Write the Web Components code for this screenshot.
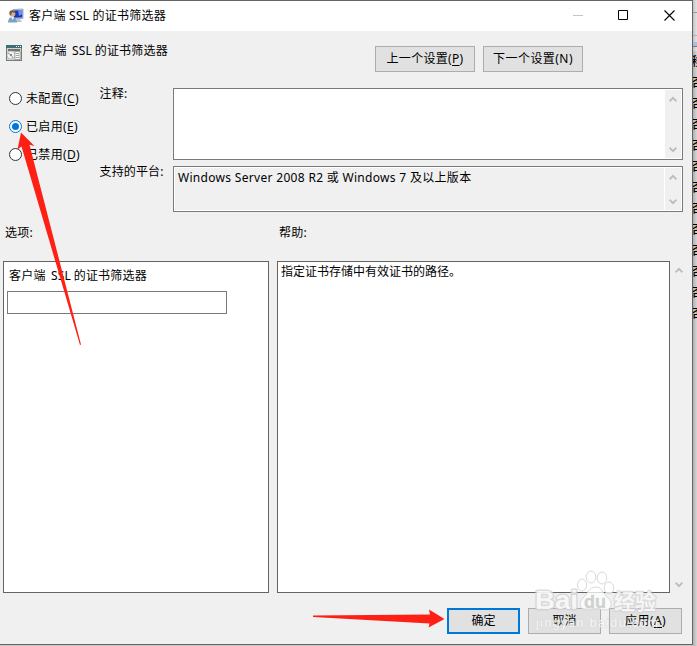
<!DOCTYPE html>
<html lang="zh-CN">
<head>
<meta charset="utf-8">
<title>客户端 SSL 的证书筛选器</title>
<style>
html,body{margin:0;width:697px;height:646px;overflow:hidden;background:#c9c9c9}
body{font:12px/16px "Noto Sans","Noto Sans CJK SC",sans-serif;color:#000}
</style>
</head>
<body>
<policy-page></policy-page>
<script>
const define = (name, html, setup) => customElements.define(name, class extends HTMLElement {
  constructor() {
    super();
    const t = document.createElement('template');
    t.innerHTML = html;
    this.attachShadow({mode: 'open'}).append(t.content.cloneNode(true));
  }
  connectedCallback() { if (setup) setup(this, this.shadowRoot); }
});

/* Text run whose letter spacing is adjusted to a given width. */
define('fit-text', `<style>:host{display:inline-block;white-space:pre;line-height:16px}span{display:inline-block}</style><span><slot></slot></span>`,
  (el, root) => {
    const s = root.querySelector('span'), w = +el.getAttribute('w');
    if (!w) return;
    const n = [...el.textContent].length;
    const d = (w - s.getBoundingClientRect().width) / n;
    s.style.letterSpacing = d.toFixed(3) + 'px';
    el.style.width = w + 'px';
  });

define('scroll-rail', `<style>
:host{display:flex;flex-direction:column;justify-content:space-between;align-items:center;width:16px;box-sizing:border-box;padding:6px 1px 5px 0;background:#f0f0f0}
svg{display:block;width:8px;height:6px}path{fill:none;stroke:#bdbdbd;stroke-width:2}</style>
<svg viewBox="0 0 8 6"><path d="M.6 5.2 4 1.8 7.4 5.2"/></svg><svg viewBox="0 0 8 6"><path d="M.6.8 4 4.2 7.4.8"/></svg>`);

define('push-button', `<style>
:host{display:flex;align-items:center;justify-content:center;box-sizing:border-box;width:73px;height:26px;background:#e1e1e1;border:1px solid #adadad}
:host([wide]){width:100px}
:host([primary]){border:2px solid #0078d7}</style><slot></slot>`);

define('radio-option', `<style>
:host{display:flex;align-items:center;height:28px;gap:4px}
i{box-sizing:border-box;width:13px;height:13px;border:1px solid #333;border-radius:50%;background:#fff;display:grid;place-items:center}
:host([checked]) i{border-color:#0078d7}
:host([checked]) i::after{content:"";width:7px;height:7px;border-radius:50%;background:#0078d7}
::slotted(*){margin-top:2px}
</style><i></i><slot></slot>`);

define('text-field', `<style>
:host{display:flex;box-sizing:border-box;border:1px solid #7a7a7a;background:#fff;padding:1px}
:host([readonly]) div{background:#f0f0f0;margin-right:1px}
div{flex:1;padding:2px 0 0 3px}</style><div><slot></slot></div><scroll-rail></scroll-rail>`);

define('title-bar', `<style>
:host{display:flex;align-items:center;height:30px;background:#fff;padding-left:8px}
.app{width:16px;height:16px;margin-right:5px}
.ctl{display:flex;margin-left:auto;margin-right:-1px}
.ctl svg{width:46px;height:30px;display:block}
</style>
<svg class="app" viewBox="0 0 16 16"><path d="M5 1.5 15 1v9.5L6 11z" fill="#d8dbe5" stroke="#8d97a9" stroke-width=".8"/><path d="M6 2.4 14.2 2v7.4L6 9.8z" fill="#1737b8"/><path d="M10 2.2 14.2 2v4L11 8z" fill="#6b92f0"/><path d="M9 11h3l2 3H8z" fill="#bcc2cd"/><path d="M0 14.5C.4 10.5 2 9 4.5 9s4.400 2 4.700 5.500z" fill="#77a3c5"/><path d="m3.200 9 1.500 3L6 9z" fill="#fff"/><circle cx="4.500" cy="5.800" r="2.900" fill="#d6b08b"/><path d="M1.400 6C1 2.500 3 1.800 5 2.300S7.700 4 7.300 5L4 4.200 2.800 7.800z" fill="#755b46"/></svg>
<slot></slot>
<span class="ctl"><svg viewBox="0 0 46 30"><path d="M18 14.500h10" stroke="#c6c6c6"/></svg><svg viewBox="0 0 46 30"><path d="M17.500 9.500h9v9h-9z" fill="none" stroke="#000"/></svg><svg viewBox="0 0 46 30"><path d="m17.500 9.500 10 10m0-10-10 10" stroke="#000" stroke-width="1.100"/></svg></span>`);

define('setting-icon', `<style>:host{display:block;width:16px;height:16px}svg{display:block}</style>
<svg width="16" height="16" viewBox="0 0 16 16"><path fill="#777b80" d="M0 0h16v16H0z"/><path fill="#3f6f72" d="M0 0h16v3H0z"/><path fill="#fff" d="M10 1h1v1h-1zM12 1h1v1h-1zM14 1h1v1h-1z"/><path fill="#d5d2c8" d="M1 3h14v12H1z"/><path fill="#6d7475" d="M2 4h12v2H2z"/><circle cx="5" cy="10" r="4" fill="#f2f2f2" stroke="#999" stroke-width=".5"/><path d="m5 10-3-2m3 2 2 3" stroke="#81ab7c"/><circle cx="5" cy="10" r="1" fill="#777"/><path fill="#fff" stroke="#777" stroke-width=".6" d="M9 6.500h5v8H9z"/><path stroke="#868686" stroke-width=".8" d="M10 8.500h3m-3 2h3m-3 2h3"/></svg>`);

define('option-panel', `<style>:host{display:block;box-sizing:border-box;border:1px solid #646464;background:#fff;height:332px}</style><slot></slot>`);

define('backdrop-list', `<style>
:host{position:absolute;left:693px;top:0;width:4px;height:646px;overflow:hidden;background:linear-gradient(90deg,#b0b0b0,#d6d6d6)}
.top{box-sizing:border-box;height:51px;padding-top:12px;background:linear-gradient(90deg,#c3c3c3,#e4e4e4)}
.line{height:1px;background:#999;margin-bottom:22px}.line+.line{margin-bottom:6px;background:#b0b0b0}
.band{height:4px;background:#a9bfd6;border-bottom:1px solid #777}
div.row{height:21px;line-height:21px;white-space:nowrap;text-indent:-1.500px;font-weight:500}
</style><div class="top"><div class="line"></div><div class="line"></div><div class="band"></div></div><div class="row">移</div>`, (el, root) => {
  if (root.childElementCount > 5) return;
  for (let i = 0; i < 12; i++) {
    const r = document.createElement('div'); r.className = 'row'; r.textContent = '否'; root.append(r);
  }
});

define('red-arrows', `<style>:host{position:absolute;left:0;top:0}svg{display:block}</style>
<svg width="697" height="646"><g fill="#ff2015"><path d="M21 132.500 34.500 146 29.500 144.800 81 344.500 80 345 21.500 146.500 17.500 149.500z"/><path d="M313 615.500 430 614.500 429 609.500 444.500 619 428.500 627.500 429.500 623.500 313 617z"/></g></svg>`);

define('brand-mark', `<style>
:host{position:absolute;left:530px;top:566px;width:167px;height:80px}
svg{display:block}
text{font-family:"Liberation Sans","Noto Sans CJK SC",sans-serif;font-weight:700;fill:#fff;fill-opacity:.8;stroke:#cfcfcf;stroke-opacity:.7;stroke-width:3.500;stroke-linejoin:round;paint-order:stroke}
.paw{fill:#fff;fill-opacity:.75;stroke:#cfcfcf;stroke-opacity:.8}
</style><svg width="167" height="80"><g class="paw"><ellipse cx="52" cy="19" rx="4.500" ry="6"/><ellipse cx="61" cy="11" rx="4.800" ry="6"/><ellipse cx="72" cy="12" rx="4.800" ry="6"/><ellipse cx="79" cy="22" rx="4.800" ry="6"/><path d="M66 21c6 0 7 7 12 11s4 12-3 12c-4 0-6-1-9-1s-5 1-9 1c-8 0-9-8-3-13 4-4 5-10 12-10z"/></g>
<text x="5" y="43" font-size="26" textLength="43" lengthAdjust="spacingAndGlyphs" style="stroke-width:3">Bai</text><text x="54" y="42" font-size="19" textLength="22" lengthAdjust="spacingAndGlyphs" style="fill:#c6c6c6;stroke-width:.5">du</text><text x="84" y="43" font-size="21" textLength="42" style="stroke-width:2.500">经验</text>
<text x="6" y="61" font-size="12.500" textLength="122" style="font-weight:400;stroke-width:1.200;stroke-opacity:.5">jingyan.baidu.com</text></svg>`);

define('policy-page', `<style>
:host{display:block;position:relative;width:697px;height:646px}
.dialog{box-sizing:border-box;width:693px;height:645px;border:solid #646464;border-width:1px 1px 1px 0;background:#f0f0f0}
header{display:flex;height:57px;align-items:flex-start}
header setting-icon{margin:14px 8px 0 6px}
header fit-text.name{margin-top:12px}
nav{display:flex;gap:8px;margin:15px 0 0 auto;padding-right:109px}
.settings{display:grid;grid-template-columns:90.500px 73.500px 510px;padding-left:9px;height:124px}
.radios{margin-top:-4px}
.fields{display:flex;flex-direction:column;gap:6px}
.labels{display:flex;flex-direction:column;gap:62px;margin-top:-2px}
.labels fit-text,.heads fit-text{display:block}
.heads{display:grid;grid-template-columns:274px 1fr;padding:13px 0 0 5px;height:36px}
.panels{display:grid;grid-template-columns:266px 393px 16px;padding-left:3px;column-gap:8px}
.panels scroll-rail{margin-left:-7px}
.opt{display:flex;flex-direction:column;padding:6px 0 0 3px}
.opt fit-text{margin-left:2px}
.input{box-sizing:border-box;width:220px;height:23px;border:1px solid #7a7a7a;margin-top:7px}
.help{padding:2px 3px}
.help fit-text{display:block}
.gap{word-spacing:-.7px}
footer{display:flex;justify-content:flex-end;gap:8px;padding:15px 10px 0 0}
u{text-underline-offset:2px;text-decoration-thickness:1px}
</style>
<backdrop-list></backdrop-list>
<div class="dialog">
<title-bar><fit-text w="137">客户端 SSL 的证书筛选器</fit-text></title-bar>
<header><setting-icon></setting-icon><fit-text class="name gap" w="138">客户端&nbsp; SSL 的证书筛选器</fit-text>
<nav><push-button wide><fit-text w="77">上一个设置(<u>P</u>)</fit-text></push-button><push-button wide><fit-text w="80">下一个设置(N)</fit-text></push-button></nav></header>
<section class="settings">
<div class="radios"><radio-option><fit-text w="53">未配置(<u>C</u>)</fit-text></radio-option><radio-option checked><fit-text w="52">已启用(<u>E</u>)</fit-text></radio-option><radio-option><fit-text w="54">已禁用(<u>D</u>)</fit-text></radio-option></div>
<div class="labels"><fit-text w="28">注释:</fit-text><fit-text w="64">支持的平台:</fit-text></div>
<div class="fields"><text-field style="height:72px"></text-field><text-field readonly style="height:46px"><fit-text w="293.500">Windows Server 2008 R2 或 Windows 7 及以上版本</fit-text></text-field></div>
</section>
<section class="heads"><fit-text w="28">选项:</fit-text><fit-text w="28">帮助:</fit-text></section>
<section class="panels"><option-panel><div class="opt"><fit-text class="gap" w="138">客户端&nbsp; SSL 的证书筛选器</fit-text><div class="input"></div></div></option-panel>
<option-panel><div class="help"><fit-text w="180">指定证书存储中有效证书的路径。</fit-text></div></option-panel><scroll-rail></scroll-rail></section>
<footer><push-button primary><fit-text w="24">确定</fit-text></push-button><push-button><fit-text w="24">取消</fit-text></push-button><push-button><fit-text w="41">应用(<u>A</u>)</fit-text></push-button></footer>
</div>
<brand-mark></brand-mark><red-arrows></red-arrows>`);
</script>
</body>
</html>
